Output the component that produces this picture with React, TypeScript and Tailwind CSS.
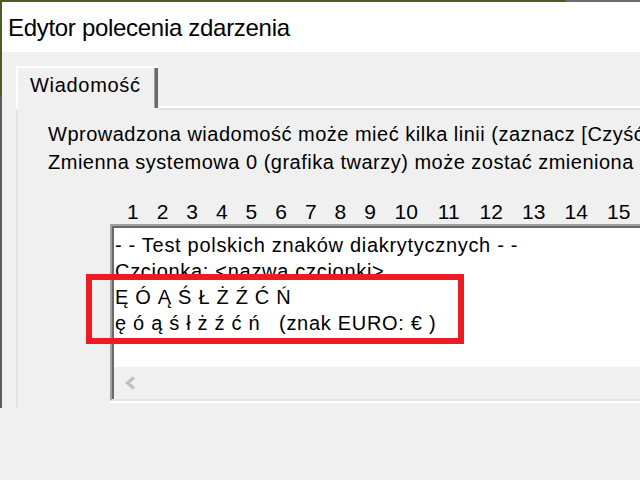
import React from 'react'

// ─── Column numbers above the message box ─────────────────────────────────────
const columns = [1, 2, 3, 4, 5, 6, 7, 8, 9, 10, 11, 12, 13, 14, 15]

const messageLines = [
  '- - Test polskich znaków diakrytycznych - -',
  'Czcionka: <nazwa czcionki>',
  'Ę Ó Ą Ś Ł Ż Ź Ć Ń',
  'ę ó ą ś ł ż ź ć ń   (znak EURO: € )',
]

function ChevronLeft() {
  return (
    <svg width="12" height="14" viewBox="0 0 12 14">
      <polyline points="10,1.5 3.5,7 10,12.5" fill="none" stroke="#c2c2c2" strokeWidth="3.4" />
    </svg>
  )
}

export default function App() {
  return (
    <div className="relative h-[480px] w-[640px] overflow-hidden bg-[#f0f0f0] font-['Liberation_Sans',Arial,sans-serif] text-black">
      <div className="flex h-[408px] flex-col">
        {/* ── desktop strip above the window ── */}
        <div className="flex h-[2px]">
          <div className="w-[566px] bg-[#4f5b24]" />
          <div className="flex-1 bg-[#6c6c6c]" />
        </div>

        <div className="flex min-h-0 flex-1">
          <div className="flex w-[2px] flex-col">
            <div className="h-[95px] bg-[#4f5b24]" />
            <div className="flex-1 bg-[#5d5d5d]" />
          </div>

          <div className="flex min-w-0 flex-1 flex-col">
            {/* ── title bar ── */}
            <div className="flex h-[50px] items-center bg-white pl-[6px] pt-[1px] text-[24px] tracking-[-0.3px]">
              Edytor polecenia zdarzenia
            </div>

            <div className="flex flex-1 flex-col pl-[14px] pt-[14px]">
              {/* ── tab strip ── */}
              <div className="flex h-[44px]">
                <div className="flex h-[42px] w-[142px] border-l-2 border-t-2 border-white">
                  <div className="flex flex-1 border-r-[3px] border-[#696969]">
                    <div className="flex-1 border-r border-[#a0a0a0] pl-[12px] pt-[4px] text-[20px] leading-[26px] tracking-[0.7px]">
                      Wiadomość
                    </div>
                  </div>
                </div>
                <div className="h-[4px] flex-1 self-end border-t-2 border-white bg-[#e3e3e3]" />
              </div>

              {/* ── tab page ── */}
              <div className="flex flex-1 flex-col border-l-2 border-[#e3e3e3] pl-[30px] pt-[10px]">
                <div className="whitespace-nowrap text-[20px] leading-[28px] tracking-[0.5px]">
                  <div>Wprowadzona wiadomość może mieć kilka linii (zaznacz [Czyść</div>
                  <div>Zmienna systemowa 0 (grafika twarzy) może zostać zmieniona za</div>
                </div>

                <div className="ml-[70px] mt-[23px] flex h-[25px] text-[21px] leading-[25px]">
                  {columns.map((c) => (
                    <div key={c} className={c < 10 ? 'w-[30px] text-center' : 'w-[43px] text-center'}>
                      {c}
                    </div>
                  ))}
                </div>

                {/* ── message box ── */}
                <div className="ml-[62px] w-[560px] border-b-2 border-white">
                  <div className="border-b-2 border-l-2 border-t-2 border-b-[#e3e3e3] border-l-[#a0a0a0] border-t-[#a0a0a0]">
                    <div className="border-l-2 border-t-2 border-[#696969]">
                      <div className="h-[139px] whitespace-pre bg-white pl-[1px] pt-[4px] text-[20px] leading-[26px] tracking-[0.7px]">
                        {messageLines.map((l) => (
                          <div key={l}>{l}</div>
                        ))}
                      </div>
                      <div className="flex h-[32px] items-center pl-[10px]">
                        <ChevronLeft />
                      </div>
                    </div>
                  </div>
                </div>
              </div>
            </div>
          </div>
        </div>
      </div>

      {/* ── red highlight drawn over the screenshot ── */}
      <div className="absolute left-[86px] top-[274px] h-[70px] w-[378px] border-[6px] border-[#ed1c24]" />
    </div>
  )
}
